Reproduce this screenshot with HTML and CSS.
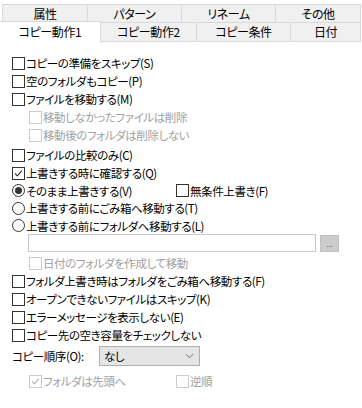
FILE: index.html
```html
<!DOCTYPE html>
<html lang="ja">
<head>
  <meta charset="UTF-8">
  <title>コピー動作1</title>
  <link rel="stylesheet" href="styles.css">
</head>
<body>
  <div class="tabs">
    <div class="tab-row top-row">
      <div class="tab w86">属性</div>
      <div class="tab w94">パターン</div>
      <div class="tab w94">リネーム</div>
      <div class="tab w85">その他</div>
    </div>
    <div class="tab-row bottom-row">
      <div class="tab active w101">コピー動作1</div>
      <div class="tab w96">コピー動作2</div>
      <div class="tab w94">コピー条件</div>
      <div class="tab w70">日付</div>
    </div>
  </div>

  <div class="page">
    <div class="opt"><span class="box"></span>コピーの準備をスキップ(S)</div>
    <div class="opt"><span class="box"></span>空のフォルダもコピー(P)</div>
    <div class="opt"><span class="box"></span>ファイルを移動する(M)</div>
    <div class="opt sub off"><span class="box"></span>移動しなかったファイルは削除</div>
    <div class="opt sub off"><span class="box"></span>移動後のフォルダは削除しない</div>

    <div class="opt gap"><span class="box"></span>ファイルの比較のみ(C)</div>
    <div class="opt"><span class="box checked"><svg viewBox="0 0 13 13"><polyline points="2.5,6.5 5.2,9.3 10.5,3.2" /></svg></span>上書きする時に確認する(Q)</div>
    <div class="opt tight">
      <span class="pair w164"><span class="radio on"></span>そのまま上書きする(V)</span>
      <span class="box"></span>無条件上書き(F)
    </div>
    <div class="opt tight"><span class="radio"></span>上書きする前にごみ箱へ移動する(T)</div>
    <div class="opt tighter"><span class="radio"></span>上書きする前にフォルダへ移動する(L)</div>

    <div class="folder-row">
      <div class="folder-input"></div>
      <div class="browse">...</div>
    </div>
    <div class="opt sub off after-input"><span class="box"></span>日付のフォルダを作成して移動</div>

    <div class="opt"><span class="box"></span>フォルダ上書き時はフォルダをごみ箱へ移動する(F)</div>
    <div class="opt"><span class="box"></span>オープンできないファイルはスキップ(K)</div>
    <div class="opt"><span class="box"></span>エラーメッセージを表示しない(E)</div>
    <div class="opt"><span class="box"></span>コピー先の空き容量をチェックしない</div>

    <div class="order-row">
      <span class="order-label">コピー順序(O):</span>
      <div class="select">
        <span>なし</span>
        <svg class="chev" viewBox="0 0 10 6"><polyline points="1,1 5,5 9,1" /></svg>
      </div>
    </div>
    <div class="opt sub off last">
      <span class="pair w147"><span class="box checked"><svg viewBox="0 0 13 13"><polyline points="2.5,6.5 5.2,9.3 10.5,3.2" /></svg></span>フォルダは先頭へ</span>
      <span class="box"></span>逆順
    </div>
  </div>
</body>
</html>
```

FILE: styles.css
```css
* {
  box-sizing: border-box;
  margin: 0;
  padding: 0;
}

body {
  background: #fff;
  color: #000;
  font-family: "Noto Sans CJK JP", "Noto Sans", sans-serif;
  font-size: 11.5px;
  letter-spacing: -0.4px;
  font-feature-settings: "palt";
  width: 362px;
  height: 408px;
  overflow: hidden;
}

/* tab strip */
.tabs {
  padding-top: 4px;
}

.tab-row {
  display: flex;
}

.top-row {
  margin-left: 2px;
  height: 19px;
}

.bottom-row {
  margin-top: -1px;
  height: 20px;
}

.tab {
  background: #f0f0f0;
  border: 1px solid #d9d9d9;
  border-left: none;
  display: flex;
  align-items: center;
  justify-content: center;
  line-height: 1;
  font-size: 12px;
}

.top-row .tab:first-child {
  border-left: 1px solid #d9d9d9;
}

.tab.active {
  background: #fff;
  border-bottom: none;
  border-left: none;
  margin-top: -1px;
  height: 22px;
  position: relative;
  z-index: 1;
  padding-bottom: 1px;
}

.w70 { width: 70px; }
.w85 { width: 85px; }
.w86 { width: 86px; }
.w94 { width: 94px; }
.w96 { width: 96px; }
.w101 { width: 101px; }

/* options */
.page {
  padding-top: 12px;
}

.opt {
  display: flex;
  align-items: center;
  height: 18px;
  padding-left: 12px;
  white-space: nowrap;
}

.opt.gap { margin-top: 2px; }
.opt.tight { height: 17.5px; }
.opt.tighter { height: 17px; }
.opt.after-input { margin-top: 2px; }
.opt.last { margin-top: 4px; }

.opt.sub {
  padding-left: 29px;
}

.pair {
  display: flex;
  align-items: center;
}

.w164 { width: 164px; }
.w147 { width: 147px; }

.box {
  width: 13px;
  height: 13px;
  border: 1px solid #333;
  background: #fff;
  margin-right: 1px;
  flex-shrink: 0;
  display: flex;
}

.box svg {
  width: 11px;
  height: 11px;
}

.box svg polyline {
  fill: none;
  stroke: #333;
  stroke-width: 1.3;
}

.radio {
  width: 13px;
  height: 13px;
  border: 1px solid #333;
  border-radius: 50%;
  margin-right: 1px;
  flex-shrink: 0;
  display: flex;
  align-items: center;
  justify-content: center;
}

.radio.on::after {
  content: "";
  width: 7px;
  height: 7px;
  border-radius: 50%;
  background: #333;
}

.off {
  color: #a0a0a0;
}

.off .box {
  border-color: #cccccc;
}

.off .box svg polyline {
  stroke: #b4b4b4;
}

/* folder path */
.folder-row {
  display: flex;
  align-items: center;
  height: 18px;
  padding-left: 28px;
}

.folder-input {
  width: 288px;
  height: 18px;
  border: 1px solid #c8c8c8;
  background: #fff;
}

.browse {
  width: 19px;
  height: 17px;
  margin-left: 4px;
  background: #cccccc;
  border: 1px solid #c0c0c0;
  color: #6d6d6d;
  font-size: 8px;
  letter-spacing: 0;
  line-height: 15px;
  text-align: center;
}

/* copy order */
.order-row {
  display: flex;
  align-items: center;
  height: 24px;
  padding-left: 12px;
}

.order-label {
  width: 87px;
}

.select {
  width: 101px;
  height: 20px;
  background: #e5e5e5;
  border: 1px solid #adadad;
  display: flex;
  align-items: center;
  justify-content: space-between;
  padding: 0 5px 0 4px;
}

.chev {
  width: 9px;
  height: 6px;
}

.chev polyline {
  fill: none;
  stroke: #606060;
  stroke-width: 1;
}
```
